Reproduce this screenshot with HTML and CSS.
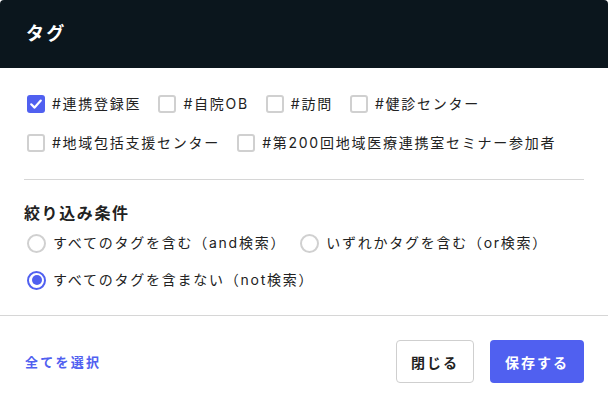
FILE: index.html
```html
<!DOCTYPE html>
<html lang="ja">
<head>
<meta charset="utf-8">
<link rel="stylesheet" href="styles.css">
</head>
<body>
<div class="dialog">
  <div class="header"><h1 class="title">タグ</h1></div>
  <div class="content">
    <div class="tags">
      <label class="check"><span class="box checked"><svg viewBox="0 0 18 18" width="18" height="18"><path d="M4.2 9.3 L7.6 12.6 L13.8 5.6" fill="none" stroke="#fff" stroke-width="2.2" stroke-linecap="round" stroke-linejoin="round"/></svg></span><span class="label">#連携登録医</span></label>
      <label class="check"><span class="box"></span><span class="label">#自院OB</span></label>
      <label class="check"><span class="box"></span><span class="label">#訪問</span></label>
      <label class="check"><span class="box"></span><span class="label">#健診センター</span></label>
      <label class="check"><span class="box"></span><span class="label">#地域包括支援センター</span></label>
      <label class="check"><span class="box"></span><span class="label">#第200回地域医療連携室セミナー参加者</span></label>
    </div>
    <div class="divider"></div>
    <h2 class="subtitle">絞り込み条件</h2>
    <div class="radios">
      <label class="radio"><span class="circle"></span><span class="label">すべてのタグを含む（and検索）</span></label>
      <label class="radio"><span class="circle"></span><span class="label">いずれかタグを含む（or検索）</span></label>
      <label class="radio"><span class="circle on"></span><span class="label">すべてのタグを含まない（not検索）</span></label>
    </div>
  </div>
  <div class="footer">
    <a class="select-all">全てを選択</a>
    <div class="actions">
      <button class="btn btn-close">閉じる</button>
      <button class="btn btn-save">保存する</button>
    </div>
  </div>
</div>
</body>
</html>
```
FILE: styles.css
```css
* { box-sizing: border-box; }
html, body { margin: 0; padding: 0; background: #fff; }
body {
  font-family: Inter, "Noto Sans CJK JP", sans-serif;
  color: #222;
}
.dialog {
  width: 608px;
  height: 408px;
  background: #fff;
  border-radius: 4px;
  overflow: hidden;
}
.header {
  height: 68px;
  background: #0b161d;
  display: flex;
  align-items: center;
  padding: 0 26px;
}
.title {
  margin: 0;
  font-size: 18px;
  font-weight: 700;
  color: #fff;
  letter-spacing: 0.12em;
  line-height: 24px;
}
.content {
  padding: 24px 24px 23px;
  border-bottom: 1px solid #d6d6d6;
}
.tags {
  display: flex;
  flex-wrap: wrap;
  row-gap: 15px;
  column-gap: 17px;
  padding-left: 3px;
}
.check, .radio {
  display: flex;
  align-items: center;
  height: 24px;
  font-size: 14px;
  letter-spacing: 0.125em;
  line-height: 24px;
  color: #222;
}
.box {
  width: 18px;
  height: 18px;
  border: 2px solid #d0d0d0;
  border-radius: 3px;
  margin-right: 7px;
  display: flex;
}
.box.checked {
  border: none;
  background: #5060f0;
}
.divider {
  height: 1px;
  background: #d6d6d6;
  margin-top: 24px;
}
.subtitle {
  margin: 21px 0 0;
  font-size: 16px;
  font-weight: 700;
  letter-spacing: 0.1em;
  line-height: 24px;
  color: #222;
}
.radios {
  display: flex;
  flex-wrap: wrap;
  row-gap: 13px;
  column-gap: 14px;
  margin-top: 6px;
  padding-left: 3px;
}
.circle {
  width: 19px;
  height: 19px;
  border: 2px solid #d0d0d0;
  border-radius: 50%;
  margin-right: 7px;
  display: flex;
  align-items: center;
  justify-content: center;
}
.circle.on {
  border-color: #5060f0;
}
.circle.on::after {
  content: "";
  width: 10px;
  height: 10px;
  border-radius: 50%;
  background: #5060f0;
}
.footer {
  display: flex;
  align-items: center;
  justify-content: space-between;
  padding: 24px 24px 24px 25px;
}
.select-all {
  font-size: 13px;
  font-weight: 700;
  letter-spacing: 0.18em;
  color: #5060f0;
  cursor: pointer;
}
.actions {
  display: flex;
  gap: 16px;
}
.btn {
  font-family: inherit;
  font-size: 14px;
  font-weight: 700;
  letter-spacing: 0.14em;
  height: 43px;
  border-radius: 4px;
  cursor: pointer;
}
.btn-close {
  width: 78px;
  background: #fff;
  color: #222;
  border: 1px solid #cfcfcf;
}
.btn-save {
  width: 94px;
  background: #5060f0;
  color: #fff;
  border: none;
}
```
